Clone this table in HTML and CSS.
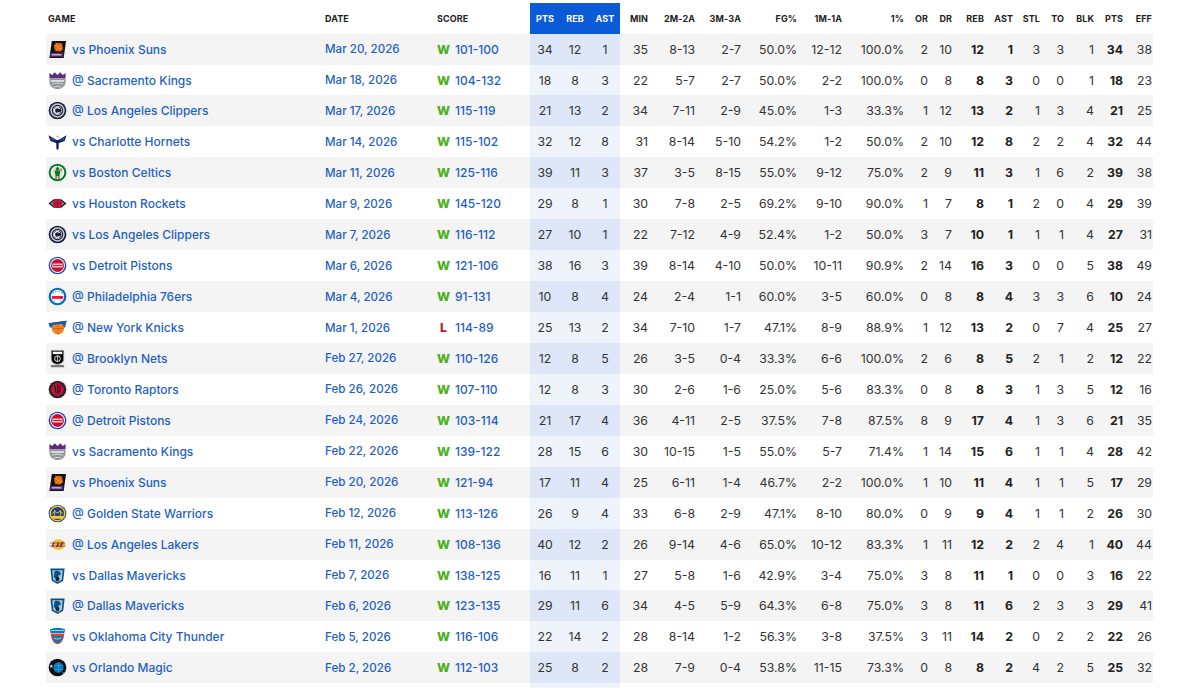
FILE: index.html
```html
<!DOCTYPE html>
<html lang="en">
<head>
<meta charset="utf-8">
<title>Game Log</title>
<link rel="stylesheet" href="styles.css">
</head>
<body>
<svg class="sprite" xmlns="http://www.w3.org/2000/svg">
  <symbol id="suns" viewBox="0 0 20 20">
    <path d="M4 1h15l-2.5 18H1.5z" fill="#111"/>
    <circle cx="11" cy="7.5" r="4.6" fill="#e56020"/>
    <path d="M6.5 5.5l9 4.5M8 2.8l5.5 9M14.8 3.5l-7 8" stroke="#f9a01b" stroke-width="0.9"/>
    <path d="M2.8 13.5h13.6l-0.6 4.2H2.3z" fill="#5a2d81"/>
    <path d="M4 15.6h10" stroke="#ddd" stroke-width="1.2"/>
  </symbol>
  <symbol id="kings" viewBox="0 0 20 20">
    <path d="M1.5 2l3 2.2L7 1.2l3 3 3-3 2.5 3 3-2.2V8h-17z" fill="#5a2d81"/>
    <path d="M1.5 8.5h17v2.5c0 5-4.2 8-8.5 8s-8.5-3-8.5-8z" fill="#8f9597"/>
    <path d="M3 10.5h14" stroke="#fff" stroke-width="1.4"/>
    <path d="M4 14c3-1.5 9-1.5 12 0M6 17c2-1 6-1 8 0" stroke="#e8e8e8" stroke-width="0.9" fill="none"/>
  </symbol>
  <symbol id="clippers" viewBox="0 0 20 20">
    <circle cx="10" cy="10" r="9.3" fill="#1d1d3b"/>
    <circle cx="10" cy="10" r="6.8" fill="none" stroke="#c4ced4" stroke-width="1.6"/>
    <circle cx="10" cy="10" r="4.3" fill="#1d1d3b" stroke="#c4ced4" stroke-width="1"/>
    <path d="M12.2 8.2a3 3 0 1 0 0 3.6" stroke="#fff" stroke-width="1.3" fill="none"/>
  </symbol>
  <symbol id="hornets" viewBox="0 0 20 20">
    <path d="M0.5 3.5L10 9l9.5-5.5-2 6L10 12 2.5 9.5z" fill="#1d1160"/>
    <path d="M2.5 5.5L9 9.5 3.5 8.5zM17.5 5.5L11 9.5l5.5-1z" fill="#00788c"/>
    <path d="M8.5 8.5h3l-0.4 9L10 19l-1.1-1.5z" fill="#1d1160"/>
    <path d="M8.8 12h2.4M8.9 14.5h2.2" stroke="#00788c" stroke-width="0.9"/>
    <path d="M8.5 5.5L10 3.5l1.5 2z" fill="#a1a1a4"/>
  </symbol>
  <symbol id="celtics" viewBox="0 0 20 20">
    <circle cx="10" cy="10" r="9.3" fill="#007a33"/>
    <circle cx="10" cy="10" r="7.2" fill="#fff"/>
    <circle cx="10" cy="10" r="6.2" fill="#e8e2c8"/>
    <path d="M10 3.5l2 3-2 2-2-2z" fill="#007a33"/>
    <path d="M7 8h6l-1 6H8z" fill="#007a33"/>
    <path d="M8.5 14v3.5M11.5 14v3.5" stroke="#6b4423" stroke-width="1.2"/>
    <circle cx="13.5" cy="7" r="1.6" fill="#ba9653"/>
  </symbol>
  <symbol id="rockets" viewBox="0 0 20 20">
    <path d="M0.5 10l5.5-4.5h8L19.5 10 14 14.5H6z" fill="#1f1f1f"/>
    <path d="M2.5 10L6.5 7h7l4 3-4 3h-7z" fill="#8a8d8f"/>
    <circle cx="10" cy="10" r="4.8" fill="#ce1141"/>
    <path d="M5.5 10h9M10 5.2v9.6" stroke="#7a0a26" stroke-width="0.7"/>
  </symbol>
  <symbol id="pistons" viewBox="0 0 20 20">
    <circle cx="10" cy="10" r="9.3" fill="#1d42ba"/>
    <circle cx="10" cy="10" r="7.8" fill="#fff"/>
    <circle cx="10" cy="10" r="6.8" fill="#c8102e"/>
    <rect x="4.6" y="7.8" width="10.8" height="4.4" rx="0.5" fill="#f3c6cc"/>
    <path d="M5.5 10h9" stroke="#c8102e" stroke-width="1"/>
  </symbol>
  <symbol id="sixers" viewBox="0 0 20 20">
    <circle cx="10" cy="10" r="9.3" fill="#006bb6"/>
    <circle cx="10" cy="10" r="7" fill="#fff"/>
    <path d="M4 9.5h12v3H4z" fill="#ed174c"/>
    <path d="M5 6l1 0.6M8 4.6l0.6 0.8M12 4.6l-0.6 0.8M15 6l-1 0.6M6 15l0.8-0.6M14 15l-0.8-0.6" stroke="#006bb6" stroke-width="1.3"/>
  </symbol>
  <symbol id="knicks" viewBox="0 0 20 20">
    <path d="M0.5 5.5L19.5 3l-1.5 7H2z" fill="#006bb6"/>
    <circle cx="10.5" cy="11" r="6.3" fill="#f58426"/>
    <path d="M4.3 11h12.4M10.5 4.7v12.6" stroke="#b85a12" stroke-width="0.7"/>
    <path d="M0.5 5.5L19.5 3l-0.6 2.6L2 7.5z" fill="#1b5aa8"/>
  </symbol>
  <symbol id="nets" viewBox="0 0 20 20">
    <path d="M3.5 1.5h13v9c0 3.3-3 5.5-6.5 5.5s-6.5-2.2-6.5-5.5z" fill="#000" stroke="#9a9a9a" stroke-width="0.8"/>
    <path d="M5 2.8h10v2.6H5z" fill="#fff"/>
    <circle cx="10" cy="10.2" r="3" fill="none" stroke="#fff" stroke-width="1"/>
    <path d="M10 7.2v6" stroke="#fff" stroke-width="0.8"/>
    <path d="M3 16.8h14v2.4H3z" fill="#777"/>
  </symbol>
  <symbol id="raptors" viewBox="0 0 20 20">
    <circle cx="10" cy="10" r="9.3" fill="#1a1a1a"/>
    <circle cx="10" cy="10" r="6.8" fill="#ce1141"/>
    <path d="M7 5l1.5 9M10 4.5l0.5 10M13 5l-1 9" stroke="#1a1a1a" stroke-width="1.2"/>
    <circle cx="10" cy="10" r="8" fill="none" stroke="#a1a1a4" stroke-width="0.5" stroke-dasharray="1 1"/>
  </symbol>
  <symbol id="warriors" viewBox="0 0 20 20">
    <circle cx="10" cy="10" r="9.3" fill="#1d428a"/>
    <circle cx="10" cy="10" r="7.6" fill="none" stroke="#ffc72c" stroke-width="1.4"/>
    <path d="M3.5 12.5h13l-1 3h-11z" fill="#ffc72c"/>
    <path d="M7 12.5V6.5M13 12.5V6.5M4 10c2 0 3-3 3-3s2 5 6 0c0 0 1 3 3 3" stroke="#ffc72c" stroke-width="0.9" fill="none"/>
  </symbol>
  <symbol id="lakers" viewBox="0 0 20 20">
    <ellipse cx="11" cy="10" rx="7" ry="5.5" fill="#fdb927"/>
    <path d="M2 8.5h16M1.5 11.5h17" stroke="#552583" stroke-width="0.6"/>
    <path d="M3.5 12.5l2.2-5h1.2l-1.6 4h2zM8.5 12.5l2-5h1.2l-1 5zM12 12.5l2-5h2.5l-0.5 1.4h-1.4l-0.3 0.8h1.3l-0.4 1.2h-1.3l-0.3 0.8h1.5l-0.5 0.8z" fill="#552583"/>
  </symbol>
  <symbol id="mavs" viewBox="0 0 20 20">
    <path d="M2.5 2.5h15l-1.5 13L10 19l-6-3.5z" fill="#00538c"/>
    <path d="M4.5 4.5h11l-1 10L10 17l-4.5-2.5z" fill="#b8c4ca"/>
    <path d="M7 5.5c3-1 6 0 6.5 3l-1 1.5-1.5-0.5 0.5 6-2.5 1.2-1.5-4-1.5-1z" fill="#00538c"/>
    <circle cx="10" cy="13.5" r="2" fill="#0c2340"/>
  </symbol>
  <symbol id="okc" viewBox="0 0 20 20">
    <path d="M2 2.5c5-2 11-2 16 0l-0.8 4H2.8z" fill="#007ac1"/>
    <path d="M3.5 3.6h13" stroke="#fff" stroke-width="1.1" stroke-dasharray="1.2 0.5"/>
    <path d="M3 7h14c0 6-3.5 11-7 11S3 13 3 7z" fill="#ef3b24"/>
    <path d="M4 9.5h12c-0.5 4-3 7-6 7s-5.5-3-6-7z" fill="#007ac1"/>
    <path d="M6 11.5c2 1.5 6 1.5 8 0" stroke="#fdbb30" stroke-width="1.1" fill="none"/>
  </symbol>
  <symbol id="magic" viewBox="0 0 20 20">
    <circle cx="10" cy="10" r="9.3" fill="#111"/>
    <circle cx="11" cy="10" r="5.4" fill="#0077c0"/>
    <path d="M6.6 8h8.8M6.6 12h8.8M11 4.6v10.8" stroke="#4fa3de" stroke-width="0.7"/>
    <path d="M3.5 6.5l0.6 1.3 1.4 0.2-1 1 0.3 1.4-1.3-0.7-1.3 0.7 0.3-1.4-1-1 1.4-0.2z" fill="#c4ced4"/>
    <path d="M15.5 15.5l2 1" stroke="#c4ced4" stroke-width="1"/>
  </symbol>
</svg>

<div class="stats">
  <div class="row head">
    <div class="game">Game</div><div>Date</div><div>Score</div><div>PTS</div><div>REB</div><div>AST</div><div>MIN</div><div>2M-2A</div><div>3M-3A</div><div>FG%</div><div>1M-1A</div><div>1%</div><div>OR</div><div>DR</div><div>REB</div><div>AST</div><div>STL</div><div>TO</div><div>BLK</div><div>PTS</div><div>EFF</div>
  </div>

  <div class="row line odd"><div class="game"><svg class="logo"><use href="#suns"/></svg><a href="#">vs Phoenix Suns</a></div><div><a href="#">Mar 20, 2026</a></div><div class="score"><b class="w">W</b><a href="#">101-100</a></div><div>34</div><div>12</div><div>1</div><div>35</div><div>8-13</div><div>2-7</div><div>50.0%</div><div>12-12</div><div>100.0%</div><div>2</div><div>10</div><div>12</div><div>1</div><div>3</div><div>3</div><div>1</div><div>34</div><div>38</div></div>

  <div class="row line"><div class="game"><svg class="logo"><use href="#kings"/></svg><a href="#">@ Sacramento Kings</a></div><div><a href="#">Mar 18, 2026</a></div><div class="score"><b class="w">W</b><a href="#">104-132</a></div><div>18</div><div>8</div><div>3</div><div>22</div><div>5-7</div><div>2-7</div><div>50.0%</div><div>2-2</div><div>100.0%</div><div>0</div><div>8</div><div>8</div><div>3</div><div>0</div><div>0</div><div>1</div><div>18</div><div>23</div></div>

  <div class="row line odd"><div class="game"><svg class="logo"><use href="#clippers"/></svg><a href="#">@ Los Angeles Clippers</a></div><div><a href="#">Mar 17, 2026</a></div><div class="score"><b class="w">W</b><a href="#">115-119</a></div><div>21</div><div>13</div><div>2</div><div>34</div><div>7-11</div><div>2-9</div><div>45.0%</div><div>1-3</div><div>33.3%</div><div>1</div><div>12</div><div>13</div><div>2</div><div>1</div><div>3</div><div>4</div><div>21</div><div>25</div></div>

  <div class="row line"><div class="game"><svg class="logo"><use href="#hornets"/></svg><a href="#">vs Charlotte Hornets</a></div><div><a href="#">Mar 14, 2026</a></div><div class="score"><b class="w">W</b><a href="#">115-102</a></div><div>32</div><div>12</div><div>8</div><div>31</div><div>8-14</div><div>5-10</div><div>54.2%</div><div>1-2</div><div>50.0%</div><div>2</div><div>10</div><div>12</div><div>8</div><div>2</div><div>2</div><div>4</div><div>32</div><div>44</div></div>

  <div class="row line odd"><div class="game"><svg class="logo"><use href="#celtics"/></svg><a href="#">vs Boston Celtics</a></div><div><a href="#">Mar 11, 2026</a></div><div class="score"><b class="w">W</b><a href="#">125-116</a></div><div>39</div><div>11</div><div>3</div><div>37</div><div>3-5</div><div>8-15</div><div>55.0%</div><div>9-12</div><div>75.0%</div><div>2</div><div>9</div><div>11</div><div>3</div><div>1</div><div>6</div><div>2</div><div>39</div><div>38</div></div>

  <div class="row line"><div class="game"><svg class="logo"><use href="#rockets"/></svg><a href="#">vs Houston Rockets</a></div><div><a href="#">Mar 9, 2026</a></div><div class="score"><b class="w">W</b><a href="#">145-120</a></div><div>29</div><div>8</div><div>1</div><div>30</div><div>7-8</div><div>2-5</div><div>69.2%</div><div>9-10</div><div>90.0%</div><div>1</div><div>7</div><div>8</div><div>1</div><div>2</div><div>0</div><div>4</div><div>29</div><div>39</div></div>

  <div class="row line odd"><div class="game"><svg class="logo"><use href="#clippers"/></svg><a href="#">vs Los Angeles Clippers</a></div><div><a href="#">Mar 7, 2026</a></div><div class="score"><b class="w">W</b><a href="#">116-112</a></div><div>27</div><div>10</div><div>1</div><div>22</div><div>7-12</div><div>4-9</div><div>52.4%</div><div>1-2</div><div>50.0%</div><div>3</div><div>7</div><div>10</div><div>1</div><div>1</div><div>1</div><div>4</div><div>27</div><div>31</div></div>

  <div class="row line"><div class="game"><svg class="logo"><use href="#pistons"/></svg><a href="#">vs Detroit Pistons</a></div><div><a href="#">Mar 6, 2026</a></div><div class="score"><b class="w">W</b><a href="#">121-106</a></div><div>38</div><div>16</div><div>3</div><div>39</div><div>8-14</div><div>4-10</div><div>50.0%</div><div>10-11</div><div>90.9%</div><div>2</div><div>14</div><div>16</div><div>3</div><div>0</div><div>0</div><div>5</div><div>38</div><div>49</div></div>

  <div class="row line odd"><div class="game"><svg class="logo"><use href="#sixers"/></svg><a href="#">@ Philadelphia 76ers</a></div><div><a href="#">Mar 4, 2026</a></div><div class="score"><b class="w">W</b><a href="#">91-131</a></div><div>10</div><div>8</div><div>4</div><div>24</div><div>2-4</div><div>1-1</div><div>60.0%</div><div>3-5</div><div>60.0%</div><div>0</div><div>8</div><div>8</div><div>4</div><div>3</div><div>3</div><div>6</div><div>10</div><div>24</div></div>

  <div class="row line"><div class="game"><svg class="logo"><use href="#knicks"/></svg><a href="#">@ New York Knicks</a></div><div><a href="#">Mar 1, 2026</a></div><div class="score"><b class="l">L</b><a href="#">114-89</a></div><div>25</div><div>13</div><div>2</div><div>34</div><div>7-10</div><div>1-7</div><div>47.1%</div><div>8-9</div><div>88.9%</div><div>1</div><div>12</div><div>13</div><div>2</div><div>0</div><div>7</div><div>4</div><div>25</div><div>27</div></div>

  <div class="row line odd"><div class="game"><svg class="logo"><use href="#nets"/></svg><a href="#">@ Brooklyn Nets</a></div><div><a href="#">Feb 27, 2026</a></div><div class="score"><b class="w">W</b><a href="#">110-126</a></div><div>12</div><div>8</div><div>5</div><div>26</div><div>3-5</div><div>0-4</div><div>33.3%</div><div>6-6</div><div>100.0%</div><div>2</div><div>6</div><div>8</div><div>5</div><div>2</div><div>1</div><div>2</div><div>12</div><div>22</div></div>

  <div class="row line"><div class="game"><svg class="logo"><use href="#raptors"/></svg><a href="#">@ Toronto Raptors</a></div><div><a href="#">Feb 26, 2026</a></div><div class="score"><b class="w">W</b><a href="#">107-110</a></div><div>12</div><div>8</div><div>3</div><div>30</div><div>2-6</div><div>1-6</div><div>25.0%</div><div>5-6</div><div>83.3%</div><div>0</div><div>8</div><div>8</div><div>3</div><div>1</div><div>3</div><div>5</div><div>12</div><div>16</div></div>

  <div class="row line odd"><div class="game"><svg class="logo"><use href="#pistons"/></svg><a href="#">@ Detroit Pistons</a></div><div><a href="#">Feb 24, 2026</a></div><div class="score"><b class="w">W</b><a href="#">103-114</a></div><div>21</div><div>17</div><div>4</div><div>36</div><div>4-11</div><div>2-5</div><div>37.5%</div><div>7-8</div><div>87.5%</div><div>8</div><div>9</div><div>17</div><div>4</div><div>1</div><div>3</div><div>6</div><div>21</div><div>35</div></div>

  <div class="row line"><div class="game"><svg class="logo"><use href="#kings"/></svg><a href="#">vs Sacramento Kings</a></div><div><a href="#">Feb 22, 2026</a></div><div class="score"><b class="w">W</b><a href="#">139-122</a></div><div>28</div><div>15</div><div>6</div><div>30</div><div>10-15</div><div>1-5</div><div>55.0%</div><div>5-7</div><div>71.4%</div><div>1</div><div>14</div><div>15</div><div>6</div><div>1</div><div>1</div><div>4</div><div>28</div><div>42</div></div>

  <div class="row line odd"><div class="game"><svg class="logo"><use href="#suns"/></svg><a href="#">vs Phoenix Suns</a></div><div><a href="#">Feb 20, 2026</a></div><div class="score"><b class="w">W</b><a href="#">121-94</a></div><div>17</div><div>11</div><div>4</div><div>25</div><div>6-11</div><div>1-4</div><div>46.7%</div><div>2-2</div><div>100.0%</div><div>1</div><div>10</div><div>11</div><div>4</div><div>1</div><div>1</div><div>5</div><div>17</div><div>29</div></div>

  <div class="row line"><div class="game"><svg class="logo"><use href="#warriors"/></svg><a href="#">@ Golden State Warriors</a></div><div><a href="#">Feb 12, 2026</a></div><div class="score"><b class="w">W</b><a href="#">113-126</a></div><div>26</div><div>9</div><div>4</div><div>33</div><div>6-8</div><div>2-9</div><div>47.1%</div><div>8-10</div><div>80.0%</div><div>0</div><div>9</div><div>9</div><div>4</div><div>1</div><div>1</div><div>2</div><div>26</div><div>30</div></div>

  <div class="row line odd"><div class="game"><svg class="logo"><use href="#lakers"/></svg><a href="#">@ Los Angeles Lakers</a></div><div><a href="#">Feb 11, 2026</a></div><div class="score"><b class="w">W</b><a href="#">108-136</a></div><div>40</div><div>12</div><div>2</div><div>26</div><div>9-14</div><div>4-6</div><div>65.0%</div><div>10-12</div><div>83.3%</div><div>1</div><div>11</div><div>12</div><div>2</div><div>2</div><div>4</div><div>1</div><div>40</div><div>44</div></div>

  <div class="row line"><div class="game"><svg class="logo"><use href="#mavs"/></svg><a href="#">vs Dallas Mavericks</a></div><div><a href="#">Feb 7, 2026</a></div><div class="score"><b class="w">W</b><a href="#">138-125</a></div><div>16</div><div>11</div><div>1</div><div>27</div><div>5-8</div><div>1-6</div><div>42.9%</div><div>3-4</div><div>75.0%</div><div>3</div><div>8</div><div>11</div><div>1</div><div>0</div><div>0</div><div>3</div><div>16</div><div>22</div></div>

  <div class="row line odd"><div class="game"><svg class="logo"><use href="#mavs"/></svg><a href="#">@ Dallas Mavericks</a></div><div><a href="#">Feb 6, 2026</a></div><div class="score"><b class="w">W</b><a href="#">123-135</a></div><div>29</div><div>11</div><div>6</div><div>34</div><div>4-5</div><div>5-9</div><div>64.3%</div><div>6-8</div><div>75.0%</div><div>3</div><div>8</div><div>11</div><div>6</div><div>2</div><div>3</div><div>3</div><div>29</div><div>41</div></div>

  <div class="row line"><div class="game"><svg class="logo"><use href="#okc"/></svg><a href="#">vs Oklahoma City Thunder</a></div><div><a href="#">Feb 5, 2026</a></div><div class="score"><b class="w">W</b><a href="#">116-106</a></div><div>22</div><div>14</div><div>2</div><div>28</div><div>8-14</div><div>1-2</div><div>56.3%</div><div>3-8</div><div>37.5%</div><div>3</div><div>11</div><div>14</div><div>2</div><div>0</div><div>2</div><div>2</div><div>22</div><div>26</div></div>

  <div class="row line odd"><div class="game"><svg class="logo"><use href="#magic"/></svg><a href="#">vs Orlando Magic</a></div><div><a href="#">Feb 2, 2026</a></div><div class="score"><b class="w">W</b><a href="#">112-103</a></div><div>25</div><div>8</div><div>2</div><div>28</div><div>7-9</div><div>0-4</div><div>53.8%</div><div>11-15</div><div>73.3%</div><div>0</div><div>8</div><div>8</div><div>2</div><div>4</div><div>2</div><div>5</div><div>25</div><div>32</div></div>

  <div class="row line"><div class="game"></div><div></div><div></div><div></div><div></div><div></div><div></div><div></div><div></div><div></div><div></div><div></div><div></div><div></div><div></div><div></div><div></div><div></div><div></div><div></div><div></div></div>
</div>
</body>
</html>
```

FILE: styles.css
```css
* { box-sizing: border-box; }

html, body {
  margin: 0;
  height: 688px;
  overflow: hidden;
  background: #fff;
}

body {
  font-family: Inter, "Open Sans", "Liberation Sans", sans-serif;
  color: #333;
}

.sprite {
  position: absolute;
  width: 0;
  height: 0;
  overflow: hidden;
}

.stats {
  margin: 3px 0 0 46px;
  width: 1107px;
}

.row {
  --hl: #eef3fc;
  display: grid;
  grid-template-columns: 279px 112px 93px 30px 30px 30px 28px 47px 46px 56px 45px 62px 24px 24px 32px 29px 27px 24px 30px 29px 29px;
  padding-right: 1px;
  height: 30.95px;
  font-size: 12.3px;
}

.row > div {
  display: flex;
  align-items: center;
  white-space: nowrap;
}

.row > :nth-child(n+7) { justify-content: flex-end; }

.row > :nth-child(4),
.row > :nth-child(5),
.row > :nth-child(6) {
  justify-content: center;
  background: var(--hl);
}

.row.odd {
  --hl: #dde7f7;
  background: #f4f4f4;
}

.head {
  --hl: #0b5ad6;
  height: 30.6px;
  font-size: 9px;
  font-weight: 700;
  color: #222;
  text-transform: uppercase;
  letter-spacing: 0.1px;
}

.head > :nth-child(4),
.head > :nth-child(5),
.head > :nth-child(6) { color: #fff; }

.line > :nth-child(15),
.line > :nth-child(16),
.line > :nth-child(20) {
  font-weight: 700;
  color: #222;
}

.game {
  padding-left: 2px;
  gap: 5px;
}

.logo {
  width: 19px;
  height: 19px;
  flex: none;
}

a {
  color: #1f5fc4;
  text-decoration: none;
  font-weight: 500;
}

.line .game a { font-size: 12px; }
.line > :nth-child(2) a { font-size: 11.6px; }

.score { gap: 5px; }

.score a { font-size: 12px; }

.score b {
  font-weight: 800;
  width: 13px;
}

.w { color: #4cb01c; }
.l { color: #d1112c; text-align: center; }
```
